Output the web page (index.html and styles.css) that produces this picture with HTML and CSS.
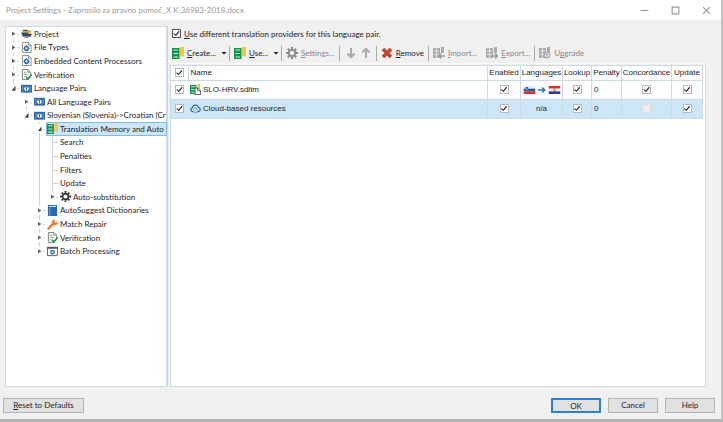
FILE: index.html
```
<!DOCTYPE html>
<html lang="en">
<head>
  <meta charset="UTF-8">
  <meta name="viewport" content="width=device-width, initial-scale=1.0">
  <title>Project Settings</title>
  <link rel="stylesheet" href="styles.css">
</head>
<body>

  <!-- Shared icons -->
  <svg class="sprite" aria-hidden="true">
    <symbol id="project" viewBox="0 0 12 12">
      <path d="M2 2h5l1 1h3v3H2z" fill="#555"/>
      <path d="M2 3.500h9V6H2z" fill="#f3c14b"/>
      <path d="M0 5h7l2 1.500h3l-1.500 3H2z" fill="#3c4a5e"/>
      <path d="M3 9h7l-2 2H5z" fill="#8a8a8a"/>
    </symbol>
    <symbol id="file" viewBox="0 0 12 12">
      <path d="M1.500 .5h6.500l3 3v8h-9.500z" fill="#fff" stroke="#888"/>
      <path d="M8 .5v3h3" fill="none" stroke="#888"/>
      <circle cx="6" cy="7" r="2" fill="none" stroke="#2b6cb5" stroke-width="1.600"/>
      <path d="M6 3.500v1.300M6 9.200v1.300M2.500 7h1.300M8.200 7h1.300" stroke="#2b6cb5"/>
    </symbol>
    <symbol id="verify" viewBox="0 0 12 12">
      <path d="M8 11.500H1.500V.5h6l3 3v3" fill="#fff" stroke="#777"/>
      <path d="M7.500.5v3h3M3 3.500h3M3 6h4M3 8.500h2" fill="none" stroke="#888"/>
      <path d="M5.500 8.500l2 2.500 4-5" fill="none" stroke="#159447" stroke-width="1.700"/>
    </symbol>
    <symbol id="langs" viewBox="0 0 12 12">
      <path d="M0 2h12v8.500H0z" fill="#2b64a5"/>
      <path d="M1 3h2v6.500H1zM9 3h2v6.500H9z" fill="#5189c5"/>
      <circle cx="6" cy="6.200" r="2.500" fill="#fff"/>
      <path d="M6 4.200v4M5 5.200h2" stroke="#2b64a5"/>
    </symbol>
    <symbol id="tm" viewBox="0 0 12 12">
      <path d="M8 0h4v10L10 8.500 8 10z" fill="#f6c344"/>
      <path d="M0 1h7.500v11H0z" fill="#12924f"/>
      <path d="M1.500 3h4.500M1.500 6.500h4.500M1.500 10h4.500" stroke="#d5eedf" stroke-width="1.200"/>
    </symbol>
    <symbol id="tmfile" viewBox="0 0 12 12">
      <path d="M8 0h3v5H8z" fill="#f6c344"/>
      <path d="M0 1h7v10H0z" fill="#12924f"/>
      <path d="M1 3h5M1 6h5M1 9h5" stroke="#d5eedf"/>
      <path d="M5.500 4.500h3.500l2.500 2.500v4.500h-6z" fill="#fff" stroke="#555"/>
      <path d="M8.500 4.500v3h3" fill="none" stroke="#555"/>
    </symbol>
    <symbol id="gear" viewBox="0 0 12 12">
      <circle cx="6" cy="6" r="3.200" fill="none" stroke="currentColor" stroke-width="1.800"/>
      <path d="M6 0v2M6 10v2M0 6h2M10 6h2M1.800 1.800l1.400 1.400M8.800 8.800l1.400 1.400M1.800 10.200l1.400-1.400M8.800 3.200l1.400-1.400" stroke="currentColor" stroke-width="2"/>
    </symbol>
    <symbol id="book" viewBox="0 0 12 12">
      <path d="M1 0h10v12H1z" fill="#2869b0"/>
      <path d="M2 1h8v1H2z" fill="#fff"/>
      <path d="M3 3v9" stroke="#82addb"/>
    </symbol>
    <symbol id="wrench" viewBox="0 0 12 12">
      <path d="M1.500 10.500L7 5" stroke="#f0742b" stroke-width="2.400" stroke-linecap="round"/>
      <path d="M8 .8L7.700 4.300l3.700-.3A3 3 0 0 1 6 5 3 3 0 0 1 8 .8z" fill="#f0742b" stroke="#f0742b"/>
    </symbol>
    <symbol id="batch" viewBox="0 0 12 12">
      <path d="M.5 1.500h11v9H.5z" fill="#fff" stroke="#555"/>
      <path d="M0 1h12v2H0z" fill="#555"/>
      <circle cx="6" cy="6.800" r="1.800" fill="none" stroke="#2b6cb5" stroke-width="1.600"/>
    </symbol>
    <symbol id="cloud" viewBox="0 0 12 12">
      <path d="M4 9.500H3A2.300 2.300 0 0 1 2.600 5 3.500 3.500 0 0 1 9.300 4.800 2.400 2.400 0 0 1 9 9.500H8" fill="none" stroke="#2b6cb5" stroke-width="1.400"/>
      <path d="M4 7.500a2 2 0 0 1 4 0M8 8a2 2 0 0 1-4 1" fill="none" stroke="#6b8fb8"/>
    </symbol>
    <symbol id="down" viewBox="0 0 12 12">
      <path d="M6 1v9M2.500 6.500L6 10.300l3.500-3.800" fill="none" stroke="#aaa" stroke-width="2"/>
    </symbol>
    <symbol id="up" viewBox="0 0 12 12">
      <path d="M6 11V2M2.500 5.500L6 1.700l3.500 3.800" fill="none" stroke="#aaa" stroke-width="2"/>
    </symbol>
    <symbol id="remove" viewBox="0 0 12 12">
      <path d="M2 2l8 8M10 2l-8 8" stroke="#c8402f" stroke-width="3.600"/>
    </symbol>
    <symbol id="transfer" viewBox="0 0 12 12">
      <path d="M0 1h7v10H0zM8 0h3v6H8z" fill="#aaa"/>
      <path d="M1 4h5M1 7.500h5M3.500 1v10" stroke="#e4e4e4"/>
      <path d="M6 9h6M8.500 6.500L6 9l2.500 2.500" fill="none" stroke="#999" stroke-width="1.300"/>
    </symbol>
    <symbol id="export" viewBox="0 0 12 12">
      <path d="M0 1h7v10H0zM8 0h3v6H8z" fill="#aaa"/>
      <path d="M1 4h5M1 7.500h5M3.500 1v10" stroke="#e4e4e4"/>
      <path d="M6 9h6M9 6.500L11.500 9 9 11.500" fill="none" stroke="#999" stroke-width="1.300"/>
    </symbol>
    <symbol id="upgrade" viewBox="0 0 12 12">
      <path d="M0 1h7v10H0zM8 0h3v5H8z" fill="#aaa"/>
      <path d="M1 4h5M1 7.500h5M3.500 1v10" stroke="#e4e4e4"/>
      <circle cx="8" cy="8" r="3" fill="#f0f0f0" stroke="#999"/>
      <path d="M8 10V7M6.500 8L8 6.500 9.500 8" fill="none" stroke="#999"/>
    </symbol>
  </svg>

  <div class="window">
    <header class="titlebar">
      <h1>Project Settings - Zaprosilo za pravno pomoč_X K 36983-2018.docx</h1>
      <div class="window-buttons">
        <button aria-label="Minimize"><svg viewBox="0 0 8 8"><path d="M.5 4h7"/></svg></button>
        <button aria-label="Maximize"><svg viewBox="0 0 8 8"><path d="M1 1h6v6H1z"/></svg></button>
        <button aria-label="Close"><svg viewBox="0 0 8 8"><path d="M1 1l6 6M7 1L1 7"/></svg></button>
      </div>
    </header>

    <main class="content">
      <nav class="tree-panel" aria-label="Settings">
        <ul class="tree">
          <li><span class="guide first"><button class="toggle" aria-label="Expand"></button></span><a href="#"><svg class="icon"><use href="#project"/></svg>Project</a></li>
          <li><span class="guide"><button class="toggle" aria-label="Expand"></button></span><a href="#"><svg class="icon"><use href="#file"/></svg>File Types</a></li>
          <li><span class="guide"><button class="toggle" aria-label="Expand"></button></span><a href="#"><svg class="icon"><use href="#file"/></svg>Embedded Content Processors</a></li>
          <li><span class="guide"><button class="toggle" aria-label="Expand"></button></span><a href="#"><svg class="icon"><use href="#verify"/></svg>Verification</a></li>
          <li><span class="guide last"><button class="toggle open" aria-label="Collapse"></button></span><a href="#"><svg class="icon"><use href="#langs"/></svg>Language Pairs</a></li>
          <li><span class="indent"></span><span class="guide"><button class="toggle" aria-label="Expand"></button></span><a href="#"><svg class="icon"><use href="#langs"/></svg>All Language Pairs</a></li>
          <li><span class="indent"></span><span class="guide last"><button class="toggle open" aria-label="Collapse"></button></span><a href="#"><svg class="icon"><use href="#langs"/></svg>Slovenian (Slovenia)-&gt;Croatian (Cr</a></li>
          <li><span class="indent"></span><span class="indent"></span><span class="guide"><button class="toggle open" aria-label="Collapse"></button></span><a href="#" class="selected"><svg class="icon"><use href="#tm"/></svg>Translation Memory and Auto</a></li>
          <li><span class="indent"></span><span class="indent"></span><span class="indent line"></span><span class="guide"></span><a href="#">Search</a></li>
          <li><span class="indent"></span><span class="indent"></span><span class="indent line"></span><span class="guide"></span><a href="#">Penalties</a></li>
          <li><span class="indent"></span><span class="indent"></span><span class="indent line"></span><span class="guide"></span><a href="#">Filters</a></li>
          <li><span class="indent"></span><span class="indent"></span><span class="indent line"></span><span class="guide"></span><a href="#">Update</a></li>
          <li><span class="indent"></span><span class="indent"></span><span class="indent line"></span><span class="guide last"><button class="toggle" aria-label="Expand"></button></span><a href="#"><svg class="icon dark"><use href="#gear"/></svg>Auto-substitution</a></li>
          <li><span class="indent"></span><span class="indent"></span><span class="guide"><button class="toggle" aria-label="Expand"></button></span><a href="#"><svg class="icon"><use href="#book"/></svg>AutoSuggest Dictionaries</a></li>
          <li><span class="indent"></span><span class="indent"></span><span class="guide"><button class="toggle" aria-label="Expand"></button></span><a href="#"><svg class="icon"><use href="#wrench"/></svg>Match Repair</a></li>
          <li><span class="indent"></span><span class="indent"></span><span class="guide"><button class="toggle" aria-label="Expand"></button></span><a href="#"><svg class="icon"><use href="#verify"/></svg>Verification</a></li>
          <li><span class="indent"></span><span class="indent"></span><span class="guide last"><button class="toggle" aria-label="Expand"></button></span><a href="#"><svg class="icon"><use href="#batch"/></svg>Batch Processing</a></li>
        </ul>
      </nav>

      <section class="providers">
        <label class="use-different"><input type="checkbox" class="check" checked><span><u>U</u>se different translation providers for this language pair.</span></label>

        <div class="toolbar">
          <button class="tool menu"><svg class="icon"><use href="#tm"/></svg><span><u>C</u>reate...</span></button>
          <button class="tool menu"><svg class="icon"><use href="#tm"/></svg><span><u>U</u>se...</span></button>
          <button class="tool" disabled><svg class="icon"><use href="#gear"/></svg><span><u>S</u>ettings...</span></button>
          <span class="tool pair">
            <button disabled aria-label="Move down"><svg class="icon"><use href="#down"/></svg></button>
            <button disabled aria-label="Move up"><svg class="icon"><use href="#up"/></svg></button>
          </span>
          <button class="tool"><svg class="icon"><use href="#remove"/></svg><span><u>R</u>emove</span></button>
          <button class="tool plain" disabled><svg class="icon"><use href="#transfer"/></svg><span><u>I</u>mport...</span></button>
          <button class="tool" disabled><svg class="icon"><use href="#export"/></svg><span><u>E</u>xport...</span></button>
          <button class="tool plain" disabled><svg class="icon"><use href="#upgrade"/></svg><span>U<u>p</u>grade</span></button>
        </div>

        <div class="table-panel">
          <table>
            <colgroup>
              <col class="col-check"><col><col class="col-enabled"><col class="col-languages"><col class="col-lookup"><col class="col-penalty"><col class="col-concordance"><col class="col-update">
            </colgroup>
            <thead>
              <tr>
                <th><input type="checkbox" class="check" checked aria-label="Select all"></th>
                <th class="left">Name</th>
                <th>Enabled</th>
                <th>Languages</th>
                <th>Lookup</th>
                <th>Penalty</th>
                <th>Concordance</th>
                <th>Update</th>
              </tr>
            </thead>
            <tbody>
              <tr>
                <td><input type="checkbox" class="check" checked aria-label="Select SLO-HRV.sdltm"></td>
                <td class="left name"><span><svg class="icon"><use href="#tmfile"/></svg>SLO-HRV.sdltm</span></td>
                <td><input type="checkbox" class="check" checked aria-label="Enabled"></td>
                <td>
                  <span class="flags">
                    <svg class="flag" viewBox="0 0 13 9"><path d="M0 0h13v3H0z" fill="#e8eaf0"/><path d="M0 3h13v3H0z" fill="#1c5cab"/><path d="M0 6h13v3H0z" fill="#e02b2b"/><path d="M2 1h3v3L3.500 5.500 2 4z" fill="#2a62a8"/><path d="M2.500 4l1-1.500 1 1.500z" fill="#fff"/></svg>
                    <svg class="arrow" viewBox="0 0 8 8"><path d="M0 4h7M4 1.500L6.800 4 4 6.500" fill="none" stroke="#2b74c0" stroke-width="1.500"/></svg>
                    <svg class="flag" viewBox="0 0 13 9"><path d="M0 0h13v3H0z" fill="#e02b2b"/><path d="M0 3h13v3H0z" fill="#f4f4f6"/><path d="M0 6h13v3H0z" fill="#20409a"/><path d="M5 2h3v3.500L6.500 7 5 5.500z" fill="#e35a5a"/><path d="M5 3h1v1H5zM7 3h1v1H7zM6 4h1v1H6z" fill="#fff"/></svg>
                  </span>
                </td>
                <td><input type="checkbox" class="check" checked aria-label="Lookup"></td>
                <td class="left">0</td>
                <td><input type="checkbox" class="check" checked aria-label="Concordance"></td>
                <td><input type="checkbox" class="check" checked aria-label="Update"></td>
              </tr>
              <tr class="selected">
                <td><input type="checkbox" class="check" checked aria-label="Select cloud-based resources"></td>
                <td class="left name"><span><svg class="icon"><use href="#cloud"/></svg>Cloud-based resources</span></td>
                <td><input type="checkbox" class="check" checked aria-label="Enabled"></td>
                <td>n/a</td>
                <td><input type="checkbox" class="check" checked aria-label="Lookup"></td>
                <td class="left">0</td>
                <td><input type="checkbox" class="check" disabled aria-label="Concordance"></td>
                <td><input type="checkbox" class="check" checked aria-label="Update"></td>
              </tr>
            </tbody>
          </table>
        </div>
      </section>
    </main>

    <footer class="actions">
      <button class="btn reset"><span><u>R</u>eset to Defaults</span></button>
      <button class="btn primary">OK</button>
      <button class="btn">Cancel</button>
      <button class="btn">Help</button>
    </footer>
  </div>

</body>
</html>
```
FILE: styles.css
```
* {
  margin: 0;
  padding: 0;
  box-sizing: border-box;
}

body {
  font-family: Lato, "Liberation Sans", sans-serif;
  font-size: 8px;
  line-height: 12px;
  color: #1f2328;
  background-color: #f0f0f0;
}

button {
  font: inherit;
  color: inherit;
  background: none;
  border: none;
}

.sprite {
  display: none;
}

.icon {
  flex: none;
  width: 11px;
  height: 11px;
}

.window {
  display: flex;
  flex-direction: column;
  min-height: 100vh;
  border-right: 2px solid #c4c4c4;
  border-bottom: 3px solid #b4b4b4;
}

/* Title bar */
.titlebar {
  display: flex;
  justify-content: space-between;
  align-items: center;
  height: 20px;
  padding: 0 10px 0 6px;
  background-color: #fff;
}

.titlebar h1 {
  font-size: 8px;
  font-weight: normal;
  color: #999;
}

.window-buttons {
  display: flex;
  gap: 22px;
}

.window-buttons button {
  display: flex;
  width: 9px;
  height: 9px;
}

.window-buttons svg {
  width: 100%;
  fill: none;
  stroke: #999;
}

.content {
  flex: 1;
  display: flex;
  gap: 2px;
  padding: 6px 15px 0 5px;
}

/* Settings tree */
.tree-panel {
  flex: none;
  width: 163px;
  background-color: #fff;
  border: 1px solid #ccdbe2;
  border-right-width: 2px;
}

.tree {
  display: grid;
  grid-template-rows: repeat(17, 1fr);
  height: 231px;
  list-style: none;
}

.tree li {
  display: flex;
  align-items: stretch;
  padding-left: 1px;
  white-space: nowrap;
}

.tree a {
  display: flex;
  align-items: center;
  gap: 2px;
  padding: 0 1px;
  color: inherit;
  text-decoration: none;
}

.tree a.selected {
  flex: 1;
  background-color: #cde6f7;
  outline: 1px solid #7cbdea;
  outline-offset: -1px;
}

.indent,
.guide {
  position: relative;
  flex: none;
  display: flex;
  align-items: center;
  justify-content: center;
  width: 13px;
}

.indent.line::before,
.guide::before {
  content: "";
  position: absolute;
  left: 6px;
  top: 0;
  bottom: 0;
  border-left: 1px solid #d4d4d4;
}

.guide.first::before {
  top: 50%;
}

.guide.last::before {
  bottom: 50%;
}

.guide::after {
  content: "";
  position: absolute;
  left: 6px;
  right: 1px;
  top: 50%;
  border-top: 1px solid #d4d4d4;
}

.toggle {
  position: relative;
  z-index: 1;
  width: 7px;
  height: 9px;
  background-color: #fff;
}

.toggle::before {
  content: "";
  display: block;
  width: 4px;
  height: 5px;
  margin: 0 auto;
  background-color: #666;
  clip-path: polygon(0 0, 100% 50%, 0 100%);
}

.toggle.open::before {
  background-color: #444;
  clip-path: polygon(100% 0, 100% 100%, 0 100%);
}

.icon.dark {
  color: #333;
}

/* Translation providers */
.providers {
  flex: 1;
  min-width: 0;
  display: flex;
  flex-direction: column;
}

.use-different {
  display: flex;
  align-items: center;
  gap: 3px;
  height: 15px;
  padding-left: 2px;
}

.check {
  appearance: none;
  flex: none;
  display: block;
  width: 9px;
  height: 9px;
  margin: 0 auto;
  background-color: #fff;
  border: 1px solid #b8b8b8;
}

.use-different .check {
  margin: 0;
  border-color: #555;
}

.check:checked::before {
  content: "";
  display: block;
  width: 7px;
  height: 7px;
  background-color: #222;
  clip-path: polygon(12% 44%, 40% 64%, 82% 12%, 94% 24%, 42% 86%, 8% 58%);
}

.check:disabled {
  background-color: #ececec;
  border-color: #ddd;
}

.toolbar {
  display: flex;
  align-items: center;
  height: 23px;
  margin-bottom: 1px;
  padding: 2px 0 0 2px;
  border-bottom: 1px solid #fafafa;
  white-space: nowrap;
}

.toolbar .icon {
  width: 12px;
  height: 12px;
}

.tool {
  display: flex;
  align-items: center;
  gap: 3px;
  height: 15px;
  margin-right: 4px;
  padding-right: 4px;
  border-right: 1px solid #aaa;
}

.tool.plain {
  padding-right: 5px;
  border-right: none;
}

.tool.menu {
  padding-right: 2px;
}

.tool.menu::after {
  content: "";
  width: 6px;
  height: 3px;
  margin-left: 2px;
  background-color: #222;
  clip-path: polygon(0 0, 100% 0, 50% 100%);
}

.tool.pair {
  padding-left: 1px;
}

.tool.pair button {
  display: flex;
}

.tool:disabled {
  color: #888;
}

.table-panel {
  flex: 1;
  font-family: "Liberation Sans", Arial, sans-serif;
  background-color: #fff;
  border: 1px solid #ccdbe2;
}

table {
  width: calc(100% - 2px);
  table-layout: fixed;
  border-collapse: collapse;
}

.col-check {
  width: 17px;
}

.col-enabled {
  width: 33px;
}

.col-languages {
  width: 42px;
}

.col-lookup {
  width: 29px;
}

.col-penalty {
  width: 30px;
}

.col-concordance {
  width: 50px;
}

.col-update {
  width: 31px;
}

th,
td {
  border-right: 1px solid #ccdbe2;
  border-bottom: 1px solid #ccdbe2;
  font-weight: normal;
  text-align: center;
  white-space: nowrap;
}

th {
  height: 14px;
}

td {
  height: 19px;
}

td:first-child {
  border-right: none;
}

.left {
  padding-left: 2px;
  text-align: left;
}

.name span {
  display: flex;
  align-items: center;
  gap: 2px;
}

tr.selected {
  background-color: #cde6f7;
}

.flags {
  display: flex;
  align-items: center;
  justify-content: center;
  gap: 2px;
}

.flag {
  width: 13px;
  height: 8px;
}

.arrow {
  width: 8px;
  height: 8px;
}

/* Dialog buttons */
.actions {
  display: flex;
  gap: 7px;
  padding: 11px 6px 6px 3px;
}

.btn {
  width: 50px;
  height: 15px;
  line-height: 11px;
  background-color: #e1e1e1;
  border: 1px solid #b4b4b4;
}

.btn.reset {
  width: 81px;
  margin-right: auto;
}

.btn.primary {
  border: 2px solid #2584d8;
  line-height: 10px;
}
```
